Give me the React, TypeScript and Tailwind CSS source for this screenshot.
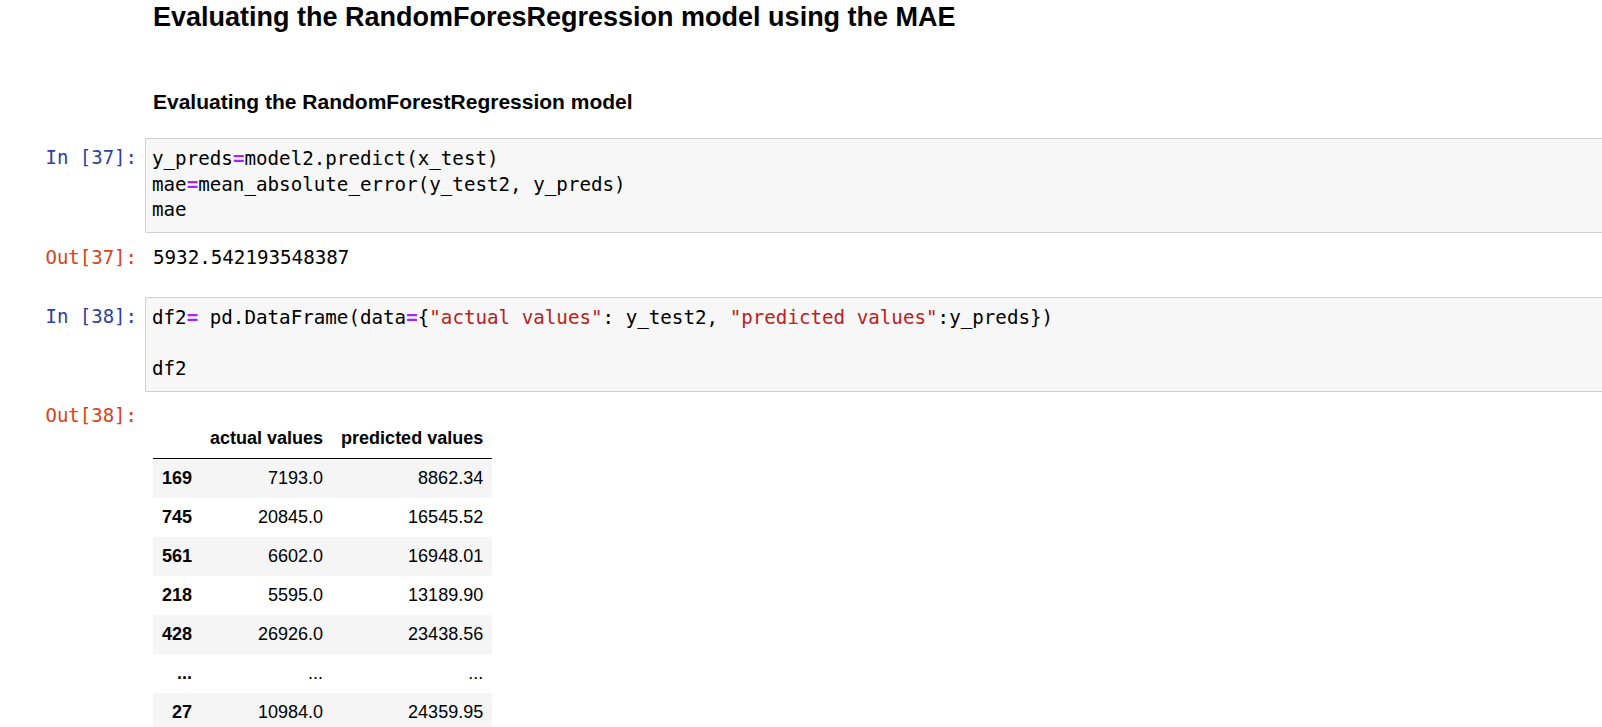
import React from 'react';

const mono = { fontFamily: '"DejaVu Sans Mono", monospace' };

const Op: React.FC<{ children: React.ReactNode }> = ({ children }) => (
  <span className="font-bold text-[#aa22ff]">{children}</span>
);

const Str: React.FC<{ children: React.ReactNode }> = ({ children }) => (
  <span className="text-[#ba2121]">{children}</span>
);

const Prompt: React.FC<{ kind: 'in' | 'out'; n: number }> = ({ kind, n }) => (
  <div
    className={`w-[137px] shrink-0 text-right text-[19px] leading-[25.5px] ${
      kind === 'in' ? 'text-[#303f9f]' : 'text-[#d84315]'
    }`}
    style={mono}
  >
    {kind === 'in' ? `In [${n}]:` : `Out[${n}]:`}
  </div>
);

const CodeCell: React.FC<{ n: number; lines: React.ReactNode[] }> = ({ n, lines }) => (
  <div className="flex gap-[8px]">
    <div className="pt-[7px]">
      <Prompt kind="in" n={n} />
    </div>
    <div
      className="flex-1 h-[95px] rounded-l-[2px] border border-r-0 border-[#cfcfcf] bg-[#f7f7f7] pl-[6px] pt-[7px] text-[19.2px] leading-[25.5px] text-black"
      style={mono}
    >
      {lines.map((l, i) => (
        <div key={i} className="whitespace-pre h-[25.5px]">
          {l}
        </div>
      ))}
    </div>
  </div>
);

const rows = [
  ['169', '7193.0', '8862.34'],
  ['745', '20845.0', '16545.52'],
  ['561', '6602.0', '16948.01'],
  ['218', '5595.0', '13189.90'],
  ['428', '26926.0', '23438.56'],
  ['...', '...', '...'],
  ['27', '10984.0', '24359.95'],
];

export default function App() {
  return (
    <div
      className="w-full h-[727px] overflow-hidden bg-white text-black"
      style={{ fontFamily: '"Liberation Sans", Arial, sans-serif' }}
    >
      <div className="pl-[153px] pt-[2px]">
        <h3 className="text-[27px] font-bold leading-[31px]">
          Evaluating the RandomForesRegression model using the MAE
        </h3>
        <h4 className="mt-[57px] text-[21px] font-bold leading-[24px]">
          Evaluating the RandomForestRegression model
        </h4>
      </div>

      <div className="mt-[24px]">
        <CodeCell
          n={37}
          lines={[
            <>y_preds<Op>=</Op>model2.predict(x_test)</>,
            <>mae<Op>=</Op>mean_absolute_error(y_test2, y_preds)</>,
            <>mae</>,
          ]}
        />
      </div>

      <div className="mt-[12px] flex gap-[8px]">
        <Prompt kind="out" n={37} />
        <div className="pl-[8px] text-[19.2px] leading-[25.5px]" style={mono}>
          5932.542193548387
        </div>
      </div>

      <div className="mt-[26px]">
        <CodeCell
          n={38}
          lines={[
            <>
              df2<Op>=</Op> pd.DataFrame(data<Op>=</Op>{'{'}
              <Str>"actual values"</Str>: y_test2, <Str>"predicted values"</Str>:y_preds{'})'}
            </>,
            <></>,
            <>df2</>,
          ]}
        />
      </div>

      <div className="mt-[11px] flex gap-[8px]">
        <Prompt kind="out" n={38} />
        <div className="pt-[16px] pl-[8px]">
          <table className="border-collapse text-[18px] leading-[21px]">
            <thead>
              <tr className="border-b border-black">
                <th className="px-[9px] py-[9px]"></th>
                <th className="px-[9px] py-[9px] text-right font-bold">actual values</th>
                <th className="px-[9px] py-[9px] text-right font-bold">predicted values</th>
              </tr>
            </thead>
            <tbody>
              {rows.map(r => (
                <tr key={r[0] + r[1]} className="odd:bg-[#f5f5f5]">
                  <th className="px-[9px] py-[9px] text-right font-bold">{r[0]}</th>
                  <td className="px-[9px] py-[9px] text-right">{r[1]}</td>
                  <td className="px-[9px] py-[9px] text-right">{r[2]}</td>
                </tr>
              ))}
            </tbody>
          </table>
        </div>
      </div>
    </div>
  );
}
